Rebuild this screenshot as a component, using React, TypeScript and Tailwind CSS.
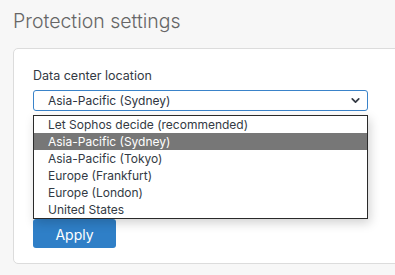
import { ChevronDown } from "lucide-react";

const options = [
  "Let Sophos decide (recommended)",
  "Asia-Pacific (Sydney)",
  "Asia-Pacific (Tokyo)",
  "Europe (Frankfurt)",
  "Europe (London)",
  "United States",
];

const App = () => {
  const selected = "Asia-Pacific (Sydney)";

  return (
    <div
      className="w-[395px] h-[275px] overflow-hidden bg-[#f7f7f7]"
      style={{ fontFamily: "Inter, 'Noto Sans', sans-serif" }}
    >
      <div className="pl-[13px] pt-[7px]">
        <h1 className="text-[19.5px] leading-[28px] text-[#666] font-light">Protection settings</h1>
      </div>

      <div className="ml-[13px] mt-[13px] w-[420px] h-[216px] bg-white border border-[#dcdcdc] rounded-[5px] pl-[19px] pt-[19px]">
        <div className="text-[12.5px] leading-[16px] text-[#333a44]">Data center location</div>

        <div className="relative mt-[6px] w-[335px]">
          {/* select box */}
          <div className="h-[21px] border border-[#3a83c9] rounded-[3px] bg-white flex items-center justify-between pl-[14px] pr-[5px]">
            <span className="text-[12px] text-[#2e3440]">{selected}</span>
            <ChevronDown size={13} strokeWidth={3.2} className="text-[#353b45]" />
          </div>

          {/* open dropdown list */}
          <div className="absolute left-0 top-[25px] w-[335px] z-10 bg-white border border-[#2a2a2a] shadow-[2px_4px_10px_rgba(0,0,0,0.18)]">
            {options.map((opt) => (
              <div
                key={opt}
                className={
                  opt === selected
                    ? "h-[17px] leading-[17px] pl-[14px] text-[12px] bg-[#777777] text-white"
                    : "h-[17px] leading-[17px] pl-[14px] text-[12px] text-[#333a44]"
                }
              >
                {opt}
              </div>
            ))}
          </div>
        </div>

        <button className="mt-[108px] w-[83px] h-[29px] pt-[2px] rounded-[3px] bg-[#2f7fc7] text-white text-[14px]">
          Apply
        </button>
      </div>
    </div>
  );
};

export default App;
